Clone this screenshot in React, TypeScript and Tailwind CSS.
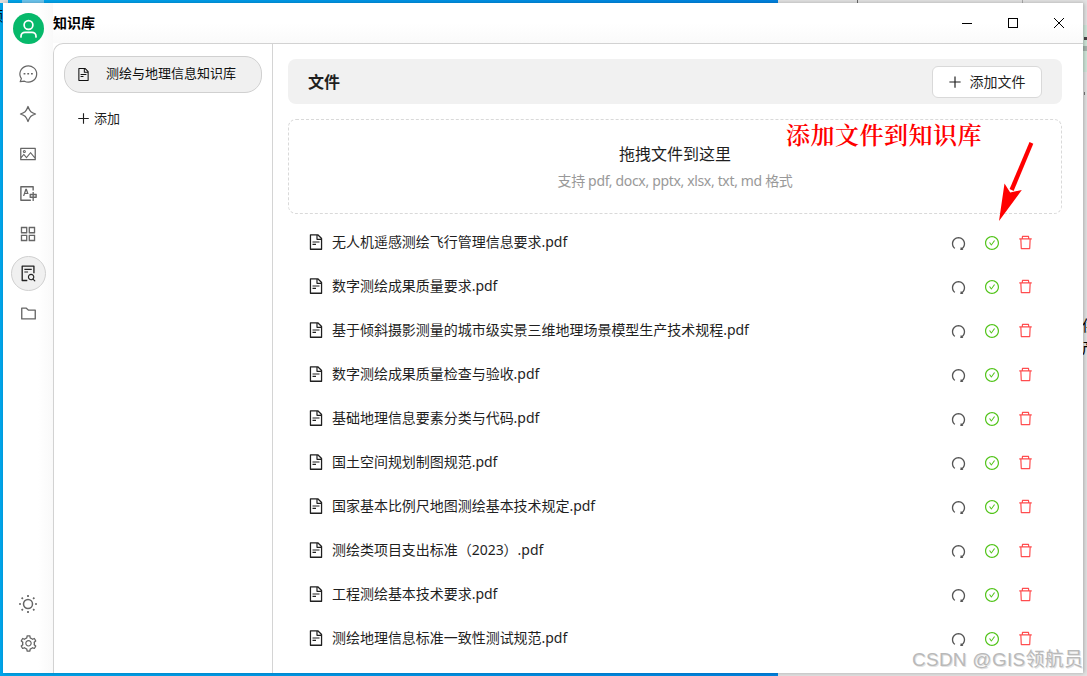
import type { ReactNode } from "react";
import {
  AiOutlineAppstore,
  AiOutlineCheckCircle,
  AiOutlineDelete,
  AiOutlineFileSearch,
  AiOutlineFileText,
  AiOutlineFolder,
  AiOutlinePicture,
  AiOutlinePlus,
  AiOutlineRedo,
  AiOutlineSetting,
  AiOutlineTranslation,
} from "react-icons/ai";

const files = [
  "无人机遥感测绘飞行管理信息要求.pdf",
  "数字测绘成果质量要求.pdf",
  "基于倾斜摄影测量的城市级实景三维地理场景模型生产技术规程.pdf",
  "数字测绘成果质量检查与验收.pdf",
  "基础地理信息要素分类与代码.pdf",
  "国土空间规划制图规范.pdf",
  "国家基本比例尺地图测绘基本技术规定.pdf",
  "测绘类项目支出标准（2023）.pdf",
  "工程测绘基本技术要求.pdf",
  "测绘地理信息标准一致性测试规范.pdf",
];

function MessageIcon() {
  return (
    <svg width="20" height="20" viewBox="0 0 20 20" fill="none" stroke="currentColor" strokeWidth="1.2">
      <path d="M2.2 17.6L3.4 14.6A8.4 8.1 0 1 1 6.5 17.2Z" strokeLinejoin="round" />
      <path d="M5.6 9.7h1.8M9.3 9.7h1.8M13 9.7h1.8" strokeWidth="1.5" />
    </svg>
  );
}

function SparkleIcon() {
  return (
    <svg width="18" height="18" viewBox="0 0 18 18" fill="none" stroke="currentColor" strokeWidth="1.3" strokeLinejoin="round">
      <path d="M9 1.5C9.9 3.9 10.6 5.3 11.6 6.4C12.7 7.4 14.1 8.1 16.5 9C14.1 9.9 12.7 10.6 11.6 11.6C10.6 12.7 9.9 14.1 9 16.5C8.1 14.1 7.4 12.7 6.4 11.6C5.3 10.6 3.9 9.9 1.5 9C3.9 8.1 5.3 7.4 6.4 6.4C7.4 5.3 8.1 3.9 9 1.5Z" />
    </svg>
  );
}

function SunIcon() {
  return (
    <svg width="18" height="18" viewBox="0 0 18 18" fill="none" stroke="currentColor" strokeWidth="1.7">
      <circle cx="9" cy="9" r="4.5" strokeWidth="1.5" />
      <path d="M9 0v2M9 16v2M0 9h2M16 9h2M2.6 2.6l1.3 1.3M14.1 14.1l1.3 1.3M2.6 15.4l1.3-1.3M14.1 3.9l1.3-1.3" />
    </svg>
  );
}

function NavItem({ active = false, children }: { active?: boolean; children: ReactNode }) {
  return (
    <button
      type="button"
      className={
        active
          ? "flex size-[35px] items-center justify-center rounded-full border border-[#d0d0d0] bg-[#f0f0f0] text-[#222]"
          : "flex size-[35px] items-center justify-center text-[#666]"
      }
    >
      {children}
    </button>
  );
}

function Desktop() {
  return (
    <div className="absolute inset-0 overflow-hidden bg-[#e2e2e2]">
      <div className="absolute inset-y-0 left-0 w-[778px] bg-linear-to-r from-[#00a6ec] to-[#0082e0]" />
      <div className="absolute top-0 left-0 h-[3px] w-2 bg-[#ddd]" />
      <div className="absolute top-0 left-[22px] h-[3px] w-[22px] bg-[#6cc5ee]" />
      <div className="absolute top-0 left-[857px] h-[3px] w-px bg-[#666]" />
      <div className="absolute top-0 left-[1022px] h-[3px] w-px bg-[#aaa]" />
      <div className="absolute top-[25px] right-0 h-[47px] w-1 bg-[#cfe6d9]" />
      <div className="absolute top-[37px] right-0 h-[3px] w-[3px] bg-[#444]" />
      <div className="absolute top-[46px] right-0 h-[5px] w-1 bg-[#a5b5ad]" />
      <div className="absolute top-[92px] right-0.5 h-[3px] w-px bg-[#777]" />
      <div className="absolute top-[8px] left-[-11px] text-[14px] leading-[16px] text-black">额</div>
      <div className="absolute top-[314px] left-[1082px] text-[15px] leading-[22px] text-black">
        供
        <br />
        产
      </div>
    </div>
  );
}

function Rail() {
  return (
    <nav className="flex w-[50px] shrink-0 flex-col items-center bg-linear-to-r from-white from-70% to-[#f9f9f9] pt-[10px] pb-[12px]">
      <div className="flex size-[31px] items-center justify-center rounded-full bg-[#07b96b]">
        <svg width="19" height="20" viewBox="0 0 19 20" fill="none" stroke="white" strokeWidth="1.7" strokeLinecap="round">
          <circle cx="9.5" cy="6" r="4.4" />
          <path d="M2 18v-.7c0-2.3 1.8-4 4-4h7c2.2 0 4 1.7 4 4v.7" />
        </svg>
      </div>
      <div className="mt-[12px] flex flex-1 flex-col gap-[5px]">
        <NavItem><MessageIcon /></NavItem>
        <NavItem><SparkleIcon /></NavItem>
        <NavItem><AiOutlinePicture size={18} /></NavItem>
        <NavItem><AiOutlineTranslation size={19} /></NavItem>
        <NavItem><AiOutlineAppstore size={20} /></NavItem>
        <NavItem active><AiOutlineFileSearch size={19} /></NavItem>
        <NavItem><AiOutlineFolder size={19} /></NavItem>
      </div>
      <div className="flex flex-col gap-[5px]">
        <NavItem><SunIcon /></NavItem>
        <NavItem><AiOutlineSetting size={19} /></NavItem>
      </div>
    </nav>
  );
}

function TitleBar() {
  return (
    <header className="flex h-10 shrink-0 items-center justify-between bg-linear-to-b from-white from-50% to-[#fafafa] text-black">
      <h1 className="pb-0.5 text-[14px] font-bold">知识库</h1>
      <div className="flex w-[139px] shrink-0 items-center">
        <svg width="46" height="40" viewBox="0 0 46 40" shapeRendering="crispEdges">
          <path d="M18 20.5h10" stroke="#000" />
        </svg>
        <svg width="46" height="40" viewBox="0 0 46 40" shapeRendering="crispEdges">
          <rect x="18.5" y="15.5" width="9" height="9" fill="none" stroke="#000" />
        </svg>
        <svg width="46" height="40" viewBox="0 0 46 40">
          <path d="M18 15l10 10M28 15l-10 10" stroke="#000" />
        </svg>
      </div>
    </header>
  );
}

function FileRow({ name }: { name: string }) {
  return (
    <li className="flex h-11 items-center justify-between pr-[28px] pl-[19px]">
      <div className="flex items-center gap-[7px] text-[14px] text-[#1f1f1f]">
        <AiOutlineFileText size={18} />
        <span className="pb-0.5 tracking-[-0.03px] whitespace-nowrap">{name}</span>
      </div>
      <div className="flex items-center gap-[17px] pt-0.5">
        <AiOutlineRedo size={17} className="text-[#555]" />
        <AiOutlineCheckCircle size={16} className="text-[#52c41a]" />
        <AiOutlineDelete size={17} className="mb-px text-[#ff4d4f]" />
      </div>
    </li>
  );
}

export default function App() {
  return (
    <div className="relative h-[676px] w-[1087px] overflow-hidden pt-[3px] pr-1 pb-[3px] pl-[3px] font-['Noto_Sans','Noto_Sans_CJK_SC',sans-serif]">
      <Desktop />
      <div className="relative flex h-full bg-white shadow-[1px_0_4px_rgba(0,0,0,0.25)]">
        <Rail />
        <div className="flex min-w-0 flex-1 flex-col">
          <TitleBar />
          <main className="flex min-h-0 flex-1 rounded-tl-[10px] border-t border-l border-[#d2d2d2] bg-white">
            <aside className="w-[219px] shrink-0 border-r border-[#d4d4d4] px-[10px] pt-3">
              <button
                type="button"
                className="flex h-[37px] w-full items-center rounded-[17px] border border-[#d0d0d0] bg-[#f0f0f0] pl-[11px] text-[13px] text-[#111]"
              >
                <AiOutlineFileText size={15} />
                <span className="ml-[15px] pb-px">测绘与地理信息知识库</span>
              </button>
              <button type="button" className="mt-4 ml-3 flex items-center gap-[3px] text-[13px] text-[#1f1f1f]">
                <AiOutlinePlus size={15} />
                添加
              </button>
            </aside>
            <section className="flex min-w-0 flex-1 flex-col overflow-hidden pt-[15px] pr-[21px] pl-[15px]">
              <div className="flex h-[45px] shrink-0 items-center justify-between rounded-lg bg-[#f1f1f1] px-5">
                <h2 className="text-[16px] font-bold text-[#1f1f1f]">文件</h2>
                <button
                  type="button"
                  className="flex h-8 w-[110px] items-center justify-center gap-[7px] rounded-md border border-[#d9d9d9] bg-white pr-0.5 text-[14px] text-[#1f1f1f]"
                >
                  <AiOutlinePlus size={16} />
                  添加文件
                </button>
              </div>
              <div className="mt-[15px] flex h-[95px] shrink-0 flex-col items-center justify-center rounded-lg border border-dashed border-[#d9d9d9]">
                <p className="text-[16px] leading-6 text-[#1f1f1f]">拖拽文件到这里</p>
                <p className="mt-1 text-[14px] leading-[22px] tracking-[-0.34px] text-[#999]">
                  支持 pdf, docx, pptx, xlsx, txt, md 格式
                </p>
              </div>
              <ul className="mt-[6px]">
                {files.map((name) => (
                  <FileRow key={name} name={name} />
                ))}
              </ul>
            </section>
          </main>
        </div>
      </div>

      <div className="absolute top-[118px] left-[786px] font-['Noto_Serif_CJK_SC','Noto_Sans_CJK_SC',serif] text-[24px] leading-8 font-semibold tracking-[0.5px] whitespace-nowrap text-[#ff0000]">
        添加文件到知识库
      </div>
      <svg className="absolute top-[140px] left-[995px]" width="40" height="84" viewBox="0 0 40 84">
        <path d="M34.5 2L38.3 3.8L18.6 51L14.6 49Z" fill="#ff0000" />
        <path d="M4 81L9.5 43.5L15.2 52.5L26.8 50Z" fill="#ff0000" />
      </svg>
      <div className="absolute top-[647px] left-[912px] font-['Liberation_Sans','Noto_Sans_CJK_SC',sans-serif] text-[19px] leading-[26px] tracking-[0.25px] whitespace-nowrap text-[#b9b9b9] [text-shadow:1px_1px_0_#e2e2e2]">
        CSDN @GIS领航员
      </div>
    </div>
  );
}
